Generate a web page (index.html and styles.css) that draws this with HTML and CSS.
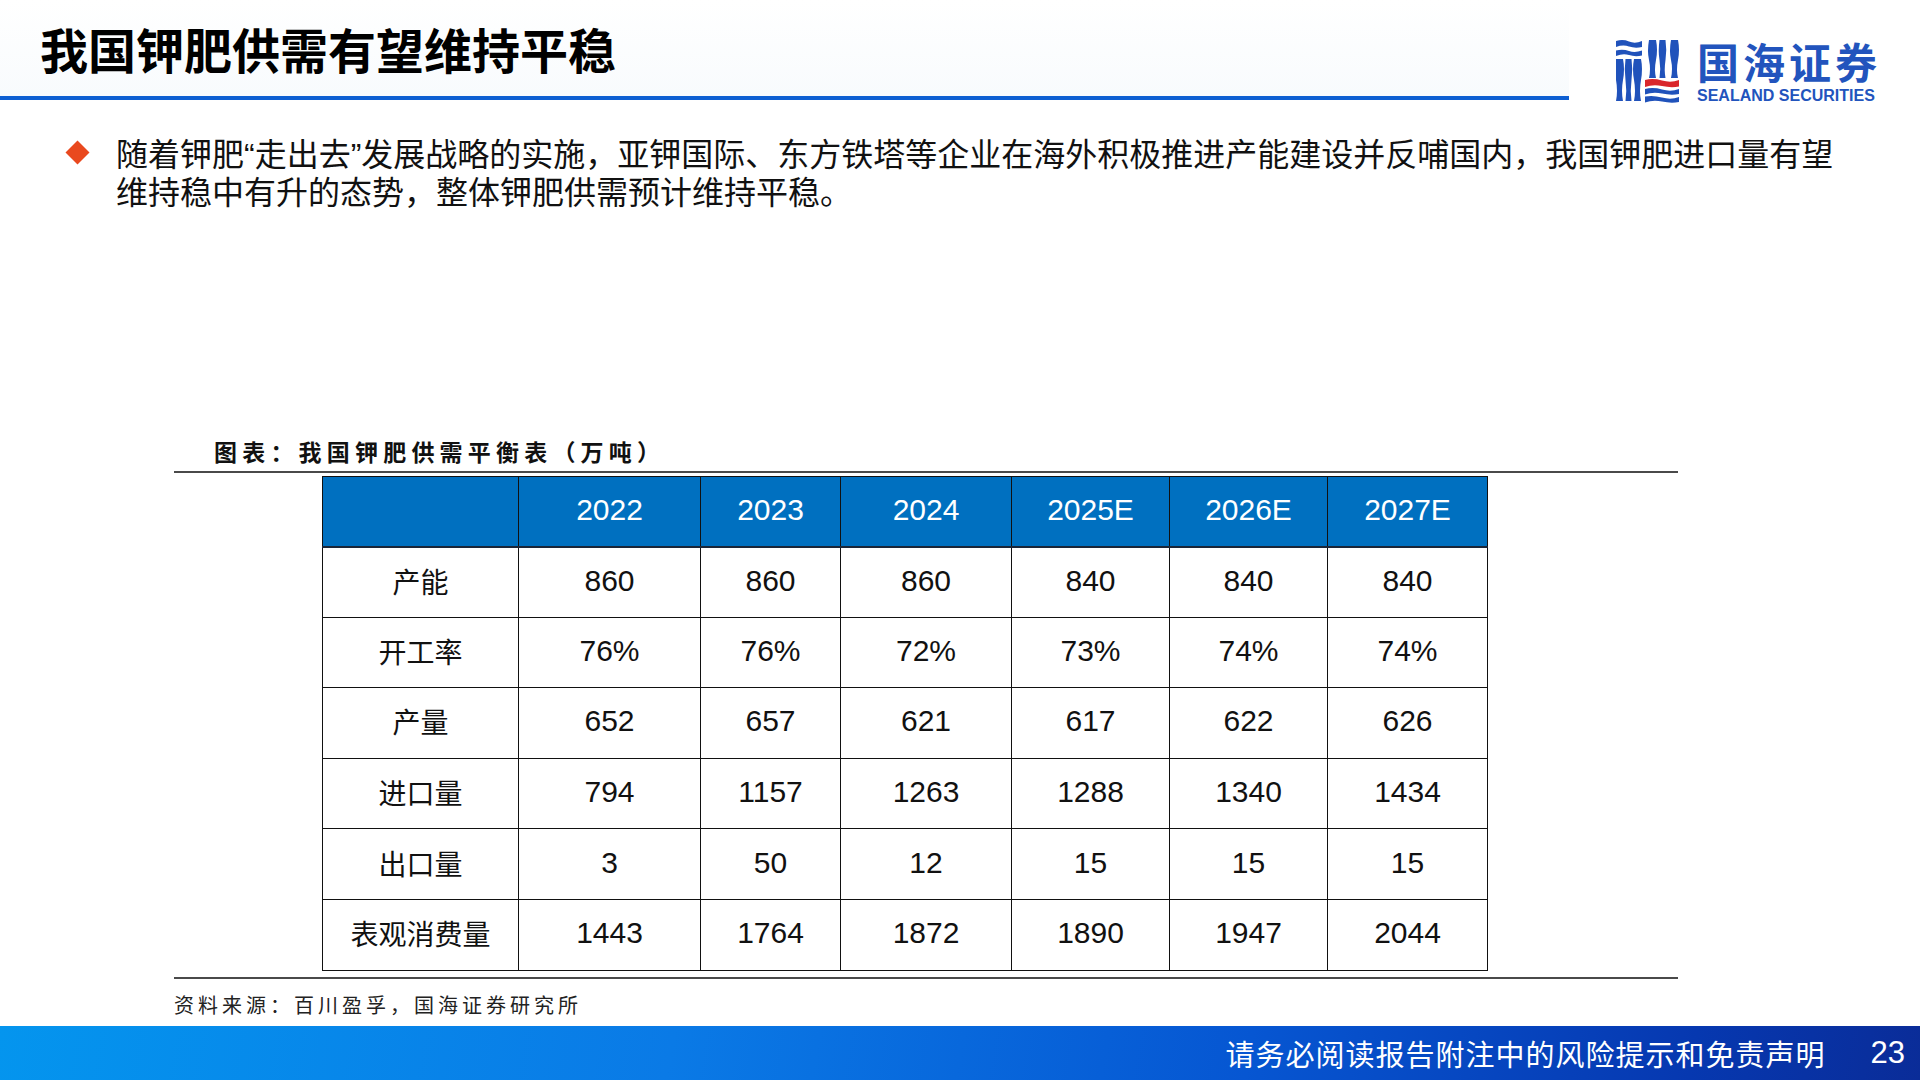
FILE: index.html
```html
<!DOCTYPE html>
<html lang="zh-CN">
<head>
<meta charset="utf-8">
<title>我国钾肥供需有望维持平稳</title>
<link rel="stylesheet" href="styles.css">
</head>
<body>
<div class="page">
  <header class="header">
    <div class="title-area">
      <h1 class="title">我国钾肥供需有望维持平稳</h1>
    </div>
    <div class="logo">
      <svg class="logo-mark" viewBox="0 0 64 64" width="64" height="64" aria-hidden="true">
        <g fill="#2052bb">
          <path d="M0 2 Q7 0 13 2.5 T26 2 V8 Q19 9.5 13 7.5 T0 8 Z"/>
          <path d="M0 11.5 Q7 10 13 12 T26 11.5 V16.5 Q19 18 13 16 T0 17 Z"/>
          <path d="M0 20 H7 Q9 30 7 41 T7 62 H0 Q2 52 0 41 T0 20 Z"/>
          <path d="M9.5 20 H15.5 Q17 30 15.5 41 T15.5 62 H9.5 Q11 52 9.5 41 T9.5 20 Z"/>
          <path d="M18 20 H25 Q27 30 25 41 T25 62 H18 Q20 52 18 41 T18 20 Z"/>
          <path d="M33 1 H40 Q42 11 40 21 T40 39 H33 Q35 30 33 21 T33 1 Z"/>
          <path d="M43.5 1 H49.5 Q51 11 49.5 21 T49.5 39 H43.5 Q45 30 43.5 21 T43.5 1 Z"/>
          <path d="M55 1 H62 Q64 11 62 21 T62 39 H55 Q57 30 55 21 T55 1 Z"/>
          <path d="M29 50 Q37 48 46 50.5 T63 50 V55 Q55 56.5 46 54.5 T29 55.5 Z"/>
          <path d="M29 57.5 Q37 56 46 58.5 T63 58 V63 Q55 64.5 46 62.5 T29 63.5 Z"/>
        </g>
        <path fill="#d9262c" d="M29 41 Q37 39 46 41.5 T63 41 V47.5 Q55 49 46 47 T29 48 Z"/>
      </svg>
      <div class="logo-text">
        <div class="logo-zh">国海证券</div>
        <div class="logo-en">SEALAND SECURITIES</div>
      </div>
    </div>
  </header>

  <section class="bullet">
    <span class="diamond-box"><span class="diamond"></span></span>
    <p class="bullet-text">随着钾肥<span class="q">“</span>走出去<span class="q">”</span>发展战略的实施，亚钾国际、东方铁塔等企业在海外积极推进产能建设并反哺国内，我国钾肥进口量有望<br>维持稳中有升的态势，整体钾肥供需预计维持平稳。</p>
  </section>

  <section class="figure">
    <div class="caption">图表：我国钾肥供需平衡表（万吨）</div>
    <table class="data">
      <colgroup>
        <col class="c1"><col class="c2"><col class="c3"><col class="c4"><col class="c5"><col class="c6"><col class="c7">
      </colgroup>
      <thead>
        <tr><th></th><th>2022</th><th>2023</th><th>2024</th><th>2025E</th><th>2026E</th><th>2027E</th></tr>
      </thead>
      <tbody>
        <tr><td class="lbl">产能</td><td>860</td><td>860</td><td>860</td><td>840</td><td>840</td><td>840</td></tr>
        <tr><td class="lbl">开工率</td><td>76%</td><td>76%</td><td>72%</td><td>73%</td><td>74%</td><td>74%</td></tr>
        <tr><td class="lbl">产量</td><td>652</td><td>657</td><td>621</td><td>617</td><td>622</td><td>626</td></tr>
        <tr><td class="lbl">进口量</td><td>794</td><td>1157</td><td>1263</td><td>1288</td><td>1340</td><td>1434</td></tr>
        <tr><td class="lbl">出口量</td><td>3</td><td>50</td><td>12</td><td>15</td><td>15</td><td>15</td></tr>
        <tr><td class="lbl">表观消费量</td><td>1443</td><td>1764</td><td>1872</td><td>1890</td><td>1947</td><td>2044</td></tr>
      </tbody>
    </table>
    <div class="rule"></div>
    <div class="source">资料来源：百川盈孚，国海证券研究所</div>
  </section>

  <footer class="footer">
    <span class="footer-text">请务必阅读报告附注中的风险提示和免责声明</span>
    <span class="page-no">23</span>
  </footer>
</div>
</body>
</html>
```

FILE: styles.css
```css
* { box-sizing: border-box; }
html, body { margin: 0; padding: 0; background: #ffffff; }
body {
  font-family: "Noto Sans CJK SC", "Noto Sans", sans-serif;
  color: #000;
}
.page {
  width: 1920px;
  height: 1080px;
  display: flex;
  flex-direction: column;
  overflow: hidden;
}

/* header */
.header {
  height: 100px;
  display: flex;
  align-items: flex-start;
}
.title-area {
  width: 1569px;
  height: 100px;
  border-bottom: 4px solid #0d5fd2;
  background: linear-gradient(#ffffff, #f8fbfd);
}
.title {
  margin: 0;
  padding: 20px 0 0 40px;
  font-size: 48px;
  line-height: 56px;
  font-weight: 700;
  color: #000;
  letter-spacing: 0;
}
.logo {
  margin-left: 47px;
  margin-top: 40px;
  display: flex;
  align-items: flex-start;
}
.logo-mark {
  display: block;
  margin-top: -1px;
  flex: none;
}
.logo-text {
  margin-left: 17px;
  display: flex;
  flex-direction: column;
}
.logo-zh {
  font-size: 42px;
  line-height: 42px;
  font-weight: 700;
  color: #2254bd;
  letter-spacing: 4px;
  white-space: nowrap;
}
.logo-en {
  font-family: "Liberation Sans", Arial, sans-serif;
  font-size: 16px;
  line-height: 16px;
  font-weight: 700;
  color: #2254bd;
  white-space: nowrap;
  margin-top: 6px;
}

/* bullet */
.bullet {
  margin-top: 33px;
  display: flex;
  align-items: flex-start;
}
.diamond-box {
  width: 24px;
  height: 38px;
  margin-left: 65px;
  display: flex;
  align-items: center;
  justify-content: center;
  flex: none;
}
.diamond {
  width: 17px;
  height: 17px;
  background: #e9491e;
  transform: rotate(45deg);
}
.bullet-text {
  margin: 0 0 0 27px;
  height: 76px;
  font-size: 32px;
  line-height: 38px;
  color: #111;
  white-space: nowrap;
}
.q {
  font-family: "Liberation Sans", Arial, sans-serif;
  line-height: 1;
}

/* figure */
.figure {
  margin-top: 227px;
  margin-left: 174px;
  width: 1504px;
}
.caption {
  padding-left: 40px;
  padding-bottom: 5px;
  font-size: 23px;
  line-height: 30px;
  font-weight: 700;
  letter-spacing: 5.2px;
  color: #111;
  border-bottom: 2px solid #4a4a4a;
}
.data {
  margin-top: 3px;
  margin-left: 148px;
  border-collapse: collapse;
  table-layout: fixed;
  width: 1165px;
  font-family: "Liberation Sans", Arial, sans-serif;
}
.c1 { width: 196px; }
.c2 { width: 182px; }
.c3 { width: 140px; }
.c4 { width: 171px; }
.c5 { width: 158px; }
.c6 { width: 158px; }
.c7 { width: 160px; }
.data th, .data td {
  border: 1px solid #111;
  text-align: center;
  vertical-align: middle;
  padding: 0 0 3px 0;
}
.data th {
  background: #0070c0;
  color: #ffffff;
  font-weight: 400;
  font-size: 30px;
  height: 70px;
  border-bottom: 2px solid #1a2638;
}
.data td {
  height: 70.6px;
  font-size: 30px;
  color: #111;
}
.data td.lbl {
  font-family: "Noto Sans CJK SC", sans-serif;
  font-size: 28px;
}
.rule {
  margin-top: 6px;
  height: 2px;
  background: #4a4a4a;
}
.source {
  margin-top: 11px;
  padding-left: 0;
  font-size: 20px;
  line-height: 30px;
  letter-spacing: 4px;
  color: #222;
}

/* footer */
.footer {
  margin-top: auto;
  height: 54px;
  display: flex;
  align-items: center;
  justify-content: flex-end;
  padding-right: 15px;
  background: linear-gradient(100deg, #0495ee 0%, #0a7ae6 35%, #0656d2 65%, #0638b0 88%, #0a2c98 100%);
  color: #ffffff;
}
.footer-text {
  font-size: 29px;
  letter-spacing: 1px;
  line-height: 40px;
}
.page-no {
  margin-left: 45px;
  font-family: "Liberation Sans", Arial, sans-serif;
  font-size: 31px;
  line-height: 40px;
}
```
